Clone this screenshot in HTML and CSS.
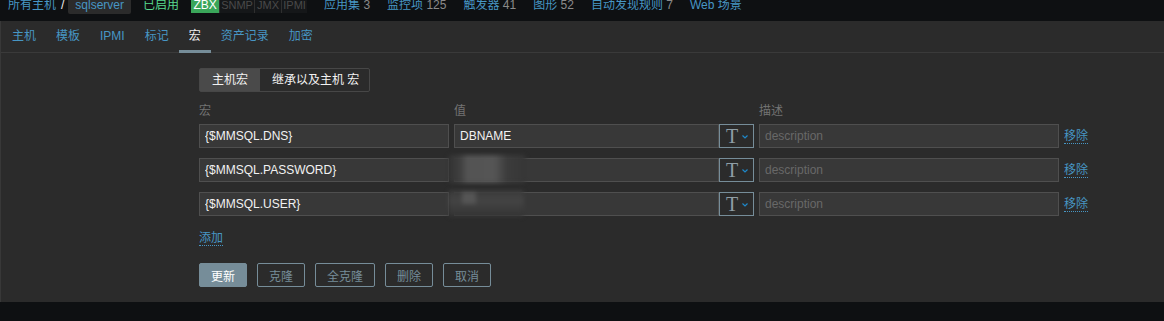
FILE: index.html
```html
<!DOCTYPE html>
<html lang="zh">

<head>
    <meta charset="UTF-8"/>
    <title>主机 - 宏</title>
    <link rel="stylesheet" href="styles.css">
</head>

<body>
    <!-- 顶部面包屑 -->
    <div class="topbar">
        <div class="crumbs">
            <a class="link">所有主机</a>
            <span class="sep">/</span>
            <a class="link host">sqlserver</a>
            <span class="status">已启用</span>
            <span class="avail">
                <span class="zbx">ZBX</span><span class="off snmp">SNMP</span><span class="off jmx">JMX</span><span class="off ipmi">IPMI</span>
            </span>
            <a class="link item">应用集 <em>3</em></a>
            <a class="link item">监控项 <em>125</em></a>
            <a class="link item">触发器 <em>41</em></a>
            <a class="link item">图形 <em>52</em></a>
            <a class="link item">自动发现规则 <em>7</em></a>
            <a class="link item">Web 场景</a>
        </div>
    </div>

    <div class="panel">
        <!-- 标签页 -->
        <ul class="tabs">
            <li>主机</li>
            <li>模板</li>
            <li>IPMI</li>
            <li>标记</li>
            <li class="active">宏</li>
            <li>资产记录</li>
            <li>加密</li>
        </ul>

        <div class="form">
            <div class="switch">
                <span class="on">主机宏</span>
                <span>继承以及主机 宏</span>
            </div>

            <div class="head">
                <span class="c-macro">宏</span>
                <span class="c-value">值</span>
                <span class="c-desc">描述</span>
            </div>

            <div class="row">
                <input class="c-macro" type="text" value="{$MMSQL.DNS}"/>
                <div class="c-value">
                    <input type="text" value="DBNAME"/>
                    <button class="type">
                        <span class="t">T</span>
                        <svg width="6" height="4" viewBox="0 0 6 4"><path d="M0.5 0.5 L3 3 L5.5 0.5" fill="none" stroke="#1e87c8" stroke-width="1.2"/></svg>
                    </button>
                </div>
                <input class="c-desc" type="text" placeholder="description"/>
                <a class="dotted">移除</a>
            </div>
            <div class="row">
                <input class="c-macro" type="text" value="{$MMSQL.PASSWORD}"/>
                <div class="c-value">
                    <input type="text" value=""/>
                    <span class="redact r2"></span>
                    <button class="type">
                        <span class="t">T</span>
                        <svg width="6" height="4" viewBox="0 0 6 4"><path d="M0.5 0.5 L3 3 L5.5 0.5" fill="none" stroke="#1e87c8" stroke-width="1.2"/></svg>
                    </button>
                </div>
                <input class="c-desc" type="text" placeholder="description"/>
                <a class="dotted">移除</a>
            </div>
            <div class="row">
                <input class="c-macro" type="text" value="{$MMSQL.USER}"/>
                <div class="c-value">
                    <input type="text" value=""/>
                    <span class="redact r3"></span>
                    <button class="type">
                        <span class="t">T</span>
                        <svg width="6" height="4" viewBox="0 0 6 4"><path d="M0.5 0.5 L3 3 L5.5 0.5" fill="none" stroke="#1e87c8" stroke-width="1.2"/></svg>
                    </button>
                </div>
                <input class="c-desc" type="text" placeholder="description"/>
                <a class="dotted">移除</a>
            </div>

            <a class="dotted add">添加</a>

            <div class="buttons">
                <button class="primary">更新</button>
                <button>克隆</button>
                <button>全克隆</button>
                <button>删除</button>
                <button>取消</button>
            </div>
        </div>
    </div>
</body>

</html>
```

FILE: styles.css
```css
* {
    margin: 0;
    padding: 0;
    box-sizing: border-box;
}

ul {
    list-style: none;
}

body {
    background: #0e1012;
    font: 12px "Liberation Sans", Arial, "Noto Sans CJK SC", sans-serif;
    color: #f2f2f2;
}

.topbar {
    height: 21px;
    overflow: hidden;
    padding-left: 8px;
}

.topbar .crumbs {
    display: flex;
    align-items: center;
    height: 18px;
    margin-top: -4px;
    line-height: 14px;
    white-space: nowrap;
}

.link {
    color: #4796c4;
}

.topbar .sep {
    color: #f2f2f2;
    margin: 0 4px 0 5px;
}

.topbar .host {
    background: #2b2b2b;
    border-radius: 2px;
    padding: 2px 7px;
    height: 18px;
}

.topbar .status {
    color: #59db8f;
    margin-left: 12px;
}

.topbar .avail {
    display: flex;
    height: 17px;
    margin-left: 12px;
    margin-top: -1px;
}

.topbar .avail span {
    padding-top: 2px;
    line-height: 14px;
    text-align: center;
}

.topbar .avail .zbx {
    width: 28px;
    background: #3aa65a;
    color: #fff;
}

.topbar .avail .off {
    color: #4a4a4a;
    border-left: 1px solid #2f2f2f;
    background: #151719;
    font-size: 11px;
}

.topbar .avail .snmp {
    width: 35px;
}

.topbar .avail .jmx {
    width: 27px;
}

.topbar .avail .ipmi {
    width: 26px;
}

.topbar .item {
    margin-left: 17px;
}

.topbar .item em {
    font-style: normal;
    color: #8a8a8a;
}

.panel {
    background: #2b2b2b;
    border-left: 1px solid #383838;
    height: 281px;
}

.tabs {
    display: flex;
    height: 32px;
    padding-left: 1px;
    border-bottom: 1px solid #3a3a3a;
}

.tabs li {
    padding: 0 10px;
    line-height: 31px;
    color: #4796c4;
    position: relative;
}

.tabs li.active {
    color: #f2f2f2;
}

.tabs li.active::after {
    content: "";
    position: absolute;
    left: 0;
    right: 0;
    bottom: -1px;
    height: 3px;
    background: #768d99;
}

.form {
    padding: 15px 0 0 198px;
}

.switch {
    display: inline-flex;
    border: 1px solid #474747;
    border-radius: 2px;
    height: 24px;
}

.switch span {
    line-height: 22px;
    padding: 0 12px;
    color: #f2f2f2;
}

.switch span + span {
    padding: 0 10px 0 12px;
}

.switch .on {
    background: #4a4a4a;
}

.head {
    display: flex;
    margin-top: 10px;
    height: 22px;
    line-height: 18px;
    color: #737373;
}

.c-macro {
    width: 250px;
}

.c-value {
    width: 300px;
    margin-left: 5px;
    display: flex;
    position: relative;
}

.c-desc {
    width: 300px;
    margin-left: 5px;
}

.row {
    display: flex;
    align-items: center;
    height: 24px;
    margin-bottom: 10px;
}

input {
    height: 24px;
    background: #383838;
    border: 1px solid #4f4f4f;
    padding: 0 5px;
    color: #f2f2f2;
    font: 12px "Liberation Sans", Arial, "Noto Sans CJK SC", sans-serif;
    outline: none;
}

input::placeholder {
    color: #686868;
}

.c-value input {
    flex: 1;
    min-width: 0;
}

.type {
    width: 35px;
    height: 24px;
    border: 1px solid #768d99;
    background: #2b2b2b;
    display: flex;
    align-items: center;
    justify-content: center;
    gap: 4px;
    padding-left: 1px;
}

.type .t {
    font: 20px "Liberation Serif", "Times New Roman", serif;
    color: #8f9ea6;
    line-height: 20px;
}

.type svg {
    margin-top: 2px;
}

.redact {
    position: absolute;
    filter: blur(2px);
    border-radius: 4px;
}

.redact.r2 {
    left: -6px;
    top: -3px;
    width: 78px;
    height: 28px;
    background: linear-gradient(90deg, #333 0, #3e3e3e 15%, #545454 25%, #555 60%, #3c3c3c 75%, #363636 100%);
}

.redact.r3 {
    left: -6px;
    top: -2px;
    width: 76px;
    height: 27px;
    background: linear-gradient(180deg, #3a3a3a 0, #444 40%, #333 100%);
}

.redact.r3::after {
    content: "";
    position: absolute;
    left: 14px;
    top: 2px;
    width: 14px;
    height: 12px;
    background: #555;
}

.dotted {
    color: #4796c4;
    border-bottom: 1px dotted #4796c4;
    line-height: 14px;
}

.row .dotted {
    margin-left: 5px;
}

.add {
    display: inline-block;
    margin-top: 5px;
}

.buttons {
    display: flex;
    gap: 10px;
    margin-top: 17px;
}

.buttons button {
    height: 24px;
    padding: 0 11px;
    border: 1px solid #768d99;
    border-radius: 2px;
    background: transparent;
    color: #768d99;
    font: 12px "Liberation Sans", Arial, "Noto Sans CJK SC", sans-serif;
}

.buttons .primary {
    background: #768d99;
    color: #fff;
}
```
